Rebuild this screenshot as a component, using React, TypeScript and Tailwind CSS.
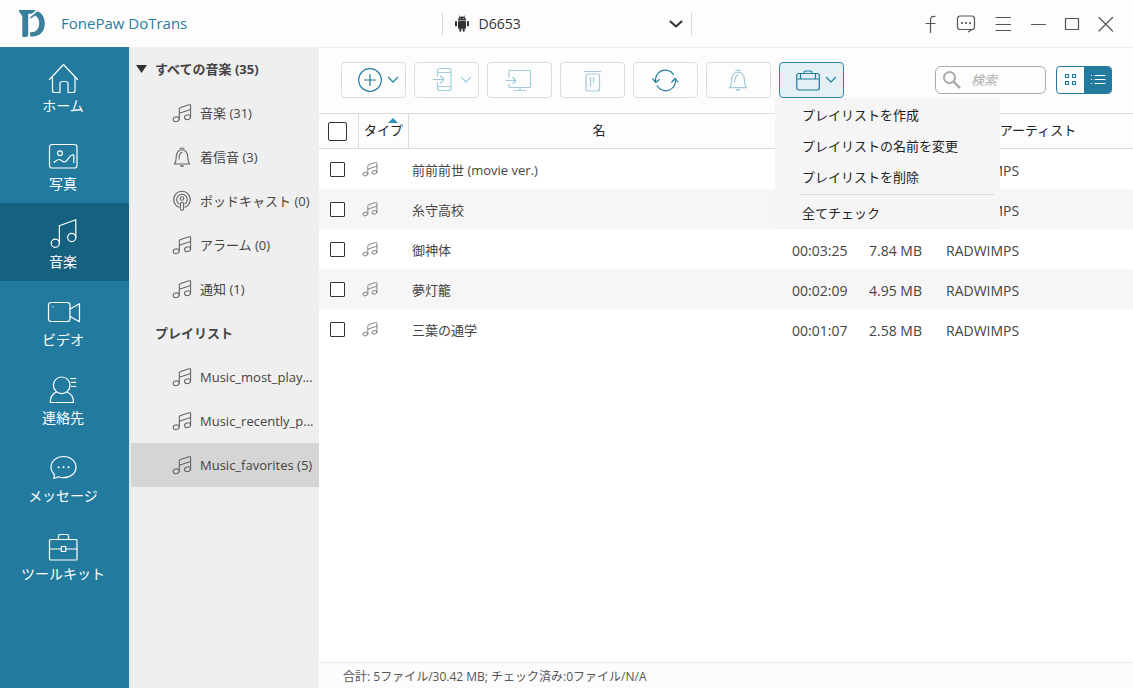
import { useState } from "react";
import type { ReactNode, SVGProps } from "react";

// ---------- Icons ----------

const Svg = ({ children, ...rest }: SVGProps<SVGSVGElement>) => (
  <svg
    fill="none"
    stroke="currentColor"
    strokeLinecap="round"
    strokeLinejoin="round"
    aria-hidden="true"
    overflow="visible"
    {...rest}
  >
    {children}
  </svg>
);

const NavSvg = ({ children }: { children: ReactNode }) => (
  <Svg viewBox="0 0 32 32" className="size-8" strokeWidth={1.2}>
    {children}
  </Svg>
);

const Logo = () => (
  <svg viewBox="0 0 28 28" className="size-7" fill="#3a7f9c" aria-hidden="true">
    <path d="M1 0h13.500c1.500 0 2.700.2 3.700.6l-4.500 3.200h-3.500V24.500c0 1.700-.9 2.500-2.500 2.500H5.500c-.8 0-1.200-.5-1.200-1.300V6.200L1 1.500z" />
    <path d="M19.500 1.200C24 3 26.800 7.500 26.800 13.300c0 8-4.800 13.200-12.300 13.200h-2.300V22.300c6 .2 9-3.200 9-9 0-3.800-1.300-6.300-3.800-7.900l-5.200 3.300V7.200z" />
  </svg>
);

const Android = () => (
  <svg viewBox="0 0 14 17" className="h-[17px] w-3.5" fill="#333" aria-hidden="true">
    <path d="M3 5.200a4 3.800 0 0 1 8 0z" />
    <path d="M4 .5l1.200 2M10 .5l-1.200 2" stroke="#333" strokeWidth=".7" />
    <rect x="3" y="5.800" width="8" height="8" rx=".8" />
    <rect x="0" y="6" width="2" height="5.500" rx="1" />
    <rect x="12" y="6" width="2" height="5.500" rx="1" />
    <rect x="4.300" y="12" width="2" height="4.800" rx="1" />
    <rect x="7.700" y="12" width="2" height="4.800" rx="1" />
    <circle cx="5.400" cy="3.600" r=".5" fill="#fff" />
    <circle cx="8.600" cy="3.600" r=".5" fill="#fff" />
  </svg>
);

const Chevron = () => (
  <Svg viewBox="0 0 10 6" className="h-1.5 w-2.5" strokeWidth={1.2}>
    <path d="M.5.500 5 5 9.500.500" />
  </Svg>
);

const Note = ({ className }: { className: string }) => (
  <Svg viewBox="0 0 20 20" className={className} strokeWidth={1.1}>
    <ellipse cx="4.200" cy="16.300" rx="3" ry="2.300" transform="rotate(-12 4.200 16.300)" />
    <ellipse cx="15.500" cy="14.200" rx="3" ry="2.300" transform="rotate(-12 15.500 14.200)" />
    <path d="M7.300 16V6.300c0-1 .4-1.500 1.300-1.800l8.500-2.700c1-.3 1.500 0 1.500 1V14M7.300 10.200l11.300-3.700" />
  </Svg>
);

const BellIcon = ({ className }: { className: string }) => (
  <Svg viewBox="0 0 20 20" className={className} strokeWidth={1.1}>
    <path d="M2.300 17h15.400c-1.500-1.500-1.800-3.500-1.900-7 0-4-2.300-7.200-5.800-7.200S4.200 6 4.200 10c0 3.500-.4 5.500-1.900 7zM8 1.200h4M7 12c0-4 .5-6 3-6.700" />
    <path d="M8.800 19h2.400" strokeWidth="1.600" />
  </Svg>
);

const Podcast = () => (
  <Svg viewBox="0 0 20 20" className="size-5" strokeWidth={1.1}>
    <path d="M7 16.300a8.300 8.300 0 1 1 6 0" />
    <path d="M7 12.900a5.300 5.300 0 1 1 6 0" />
    <circle cx="10" cy="7.500" r="1.800" />
    <rect x="8.400" y="11.300" width="3.200" height="8" rx="1.500" />
  </Svg>
);

// ---------- Data ----------

const navItems = [
  {
    label: "ホーム",
    icon: (
      <NavSvg>
        <path d="M2.500 16.500 16.500 1.500l14 15" />
        <path d="M5.500 14v13.500a2 2 0 0 0 2 2h5.500V20.500a2 2 0 0 1 2-2h4a2 2 0 0 1 2 2v9h5a2 2 0 0 0 2-2V14" />
      </NavSvg>
    ),
  },
  {
    label: "写真",
    icon: (
      <NavSvg>
        <rect x="2.500" y="3.500" width="27.500" height="23.500" rx="2.500" />
        <circle cx="13" cy="12.300" r="2.400" />
        <path d="M7 21.500c2-1.500 3-3 5-3 2.500 0 3 2.500 5.500 2.500 3.500 0 3-6 8.500-7.500q.8 0 .8 1V21.500" />
      </NavSvg>
    ),
  },
  {
    label: "音楽",
    icon: (
      <NavSvg>
        <circle cx="8.300" cy="24.300" r="4.100" />
        <circle cx="24.700" cy="18.500" r="4.100" />
        <path d="M12.400 24.300V6.700L28.800.700v17.800" />
      </NavSvg>
    ),
  },
  {
    label: "ビデオ",
    icon: (
      <NavSvg>
        <rect x="1.500" y="5.500" width="21.500" height="19" rx="2.500" />
        <path d="M23 12l9.500-5.300v18L23 19.500M6 9.700h.1" />
      </NavSvg>
    ),
  },
  {
    label: "連絡先",
    icon: (
      <NavSvg>
        <circle cx="14.700" cy="10.300" r="8.300" />
        <path d="M9.500 17C5.500 18.500 3.300 22 3.300 27.500h23.200c0-5.500-2.500-9-6.500-10.500M23.500 3.500h5.300M24.500 7.300h4.300M24.500 11.500h4.300" />
      </NavSvg>
    ),
  },
  {
    label: "メッセージ",
    icon: (
      <NavSvg>
        <path d="M6.800 25.500l.7-4C5.200 19.500 4 17 4 14.200 4 8.200 9.500 3.500 16.500 3.500S29 8.200 29 14.200s-5.500 10.500-12.500 10.500c-2 0-3.700-.3-5.300-1z" />
        <path d="M11.500 14.200h.1M16.500 14.200h.1M21.500 14.200h.1" strokeWidth="2" />
      </NavSvg>
    ),
  },
  {
    label: "ツールキット",
    icon: (
      <NavSvg>
        <rect x="2.500" y="8.500" width="27.500" height="20.500" rx="1" />
        <path d="M11.500 8.500V5a1.500 1.500 0 0 1 1.500-1.500h7A1.500 1.500 0 0 1 21.500 5v3.500M2.500 18h11.800M18.700 18H30" />
        <rect x="14.300" y="15.500" width="4.400" height="5" />
      </NavSvg>
    ),
  },
];

const note = <Note className="size-5" />;

const categories = [
  { label: "音楽 (31)", icon: note },
  { label: "着信音 (3)", icon: <BellIcon className="size-5" /> },
  { label: "ポッドキャスト (0)", icon: <Podcast /> },
  { label: "アラーム (0)", icon: note },
  { label: "通知 (1)", icon: note },
];

const playlists = ["Music_most_play...", "Music_recently_p...", "Music_favorites (5)"];

const songs = [
  { name: "前前前世 (movie ver.)", time: "", size: "", artist: "RADWIMPS" },
  { name: "糸守高校", time: "", size: "", artist: "RADWIMPS" },
  { name: "御神体", time: "00:03:25", size: "7.84 MB", artist: "RADWIMPS" },
  { name: "夢灯籠", time: "00:02:09", size: "4.95 MB", artist: "RADWIMPS" },
  { name: "三葉の通学", time: "00:01:07", size: "2.58 MB", artist: "RADWIMPS" },
];

// ---------- Header ----------

const WindowButton = ({ label, children }: { label: string; children: ReactNode }) => (
  <button aria-label={label} className="size-5 text-[#555]">
    <Svg viewBox="0 0 20 20" className="size-5" strokeWidth={1.2}>
      {children}
    </Svg>
  </button>
);

const Header = () => (
  <header className="flex h-[47px] shrink-0 items-center bg-[#fdfdfd] pr-[18px] pl-3">
    <div className="flex flex-1 items-center gap-[15px] pl-1.5">
      <Logo />
      <h1 className="text-[15px] text-[#2a7d9f]">FonePaw DoTrans</h1>
    </div>

    <div className="relative flex h-[22px] w-[250px] items-center border-x border-[#d8d8d8] pl-3">
      <Android />
      <select
        aria-label="デバイス"
        className="absolute inset-0 w-full appearance-none bg-transparent pl-9 text-sm leading-5 text-[#333] outline-none"
      >
        <option>D6653</option>
      </select>
      <Svg
        viewBox="0 0 14 8"
        className="pointer-events-none absolute right-2 h-2 w-3.5 text-[#333]"
        strokeWidth={2}
      >
        <path d="M1.500 1.500 7 6.500l5.500-5" />
      </Svg>
    </div>

    <div className="flex flex-1 items-center justify-end gap-[15px]">
      <WindowButton label="Facebook">
        <path d="M15 2.500c-3-.5-4.500.5-4.500 3.500V18.500M6 9.500h9" />
      </WindowButton>
      <WindowButton label="フィードバック">
        <path d="M16.500 15.500H5A2.500 2.500 0 0 1 2.500 13V4.500A2.500 2.500 0 0 1 5 2h12a2.500 2.500 0 0 1 2.500 2.500V13a2.500 2.500 0 0 1-2.500 2.500l-3.500 2.300" />
        <path d="M7 9h.1M11 9h.1M15 9h.1" strokeWidth="2" />
      </WindowButton>
      <WindowButton label="メニュー">
        <path d="M6 3.500h14.500M6 10.500h14.500M6 16.500h14.500" />
      </WindowButton>
      <WindowButton label="最小化">
        <path d="M6.500 10.500h14" />
      </WindowButton>
      <WindowButton label="最大化">
        <rect x="5.500" y="4.500" width="13" height="11" />
      </WindowButton>
      <WindowButton label="閉じる">
        <path d="M4 3.500l13.500 13.500M17.500 3.500L4 17" />
      </WindowButton>
    </div>
  </header>
);

// ---------- Left side ----------

const Nav = () => (
  <nav className="w-[129px] shrink-0 bg-[#227b9e]">
    {navItems.map((item) => (
      <a
        key={item.label}
        href="#"
        className={`flex h-[78px] flex-col items-center pt-4 pr-[3px] text-sm leading-[22px] text-white ${
          item.label === "音楽" ? "bg-[#14627f]" : ""
        }`}
      >
        {item.icon}
        <span>{item.label}</span>
      </a>
    ))}
  </nav>
);

const Sidebar = () => (
  <aside className="w-[190px] shrink-0 border-l-2 border-[#e3e9ec] bg-[#efefef] text-[13px] text-[#444]">
    <h2 className="flex h-11 items-center gap-2 pl-[5px] font-bold">
      <svg viewBox="0 0 11 8" className="h-2 w-[11px]" fill="#333" aria-hidden="true">
        <path d="M0 0h11L5.500 8z" />
      </svg>
      <span className="pt-0.5">すべての音楽 (35)</span>
    </h2>
    <ul>
      {categories.map((c) => (
        <li key={c.label}>
          <a href="#" className="flex h-11 items-center gap-2 pl-[41px] whitespace-nowrap">
            <span className="text-[#666]">{c.icon}</span>
            <span className="pt-0.5">{c.label}</span>
          </a>
        </li>
      ))}
    </ul>
    <h2 className="flex h-11 items-center pt-0.5 pl-6 font-bold">プレイリスト</h2>
    <ul>
      {playlists.map((p) => (
        <li key={p}>
          <a
            href="#"
            className={`flex h-11 items-center gap-2 pl-[41px] whitespace-nowrap ${
              p === "Music_favorites (5)" ? "bg-[#d5d5d5]" : ""
            }`}
          >
            <span className="text-[#666]">{note}</span>
            <span className="pt-0.5">{p}</span>
          </a>
        </li>
      ))}
    </ul>
  </aside>
);

// ---------- Toolbar ----------

type ToolButtonProps = {
  label: string;
  children: ReactNode;
  disabled?: boolean;
  arrow?: boolean;
  active?: boolean;
  onClick?: () => void;
};

const ToolButton = ({ label, children, disabled, arrow, active, onClick }: ToolButtonProps) => (
  <button
    aria-label={label}
    disabled={disabled}
    onClick={onClick}
    className={`flex h-9 w-[65px] items-center rounded border ${
      active ? "border-[#2a84a6] bg-[#e4f0f5]" : "border-[#dcdcdc]"
    } ${disabled ? "text-[#a3cbd9]" : "text-[#227b9e]"} ${arrow ? "gap-1.5 pl-4" : "justify-center"}`}
  >
    {children}
    {arrow && <Chevron />}
  </button>
);

const ToolSvg = ({ children }: { children: ReactNode }) => (
  <Svg viewBox="0 0 24 24" className="size-6" strokeWidth={1.2}>
    {children}
  </Svg>
);

const menuItem = "block h-[31px] w-full pl-[27px] text-left text-[13px] text-[#222] hover:bg-[#e4f0f5]";

const PlaylistMenu = () => (
  <div className="absolute top-9 -left-1 z-10 w-[225px] bg-[#f5f5f5] pt-0.5">
    <button className={menuItem}>プレイリストを作成</button>
    <button className={menuItem}>プレイリストの名前を変更</button>
    <button className={menuItem}>プレイリストを削除</button>
    <hr className="mt-px mr-1.5 mb-[3px] ml-[25px] border-[#d9d9d9]" />
    <button className={menuItem}>全てチェック</button>
  </div>
);

const Toolbar = () => {
  const [menuOpen, setMenuOpen] = useState(true);

  return (
    <div className="flex items-center gap-2 bg-[#fdfdfd] pt-3.5 pr-[21px] pb-[15px] pl-[22px]">
      <ToolButton label="追加" arrow>
        <ToolSvg>
          <circle cx="12" cy="12" r="11.300" />
          <path d="M12 6.500v11M6.500 12h11" />
        </ToolSvg>
      </ToolButton>
      <ToolButton label="デバイスへエクスポート" disabled arrow>
        <ToolSvg>
          <path d="M6.500 8V2.500a2 2 0 0 1 2-2h9.500a2 2 0 0 1 2 2v18a2 2 0 0 1-2 2H8.500a2 2 0 0 1-2-2V15M6.500 4.500H20M6.500 18.500H20M2 11.500h11M9.500 8l3.500 3.500L9.500 15" />
        </ToolSvg>
      </ToolButton>
      <ToolButton label="PCへエクスポート" disabled>
        <ToolSvg>
          <path d="M1 9V3.500a1 1 0 0 1 1-1h19.500a1 1 0 0 1 1 1v15a1 1 0 0 1-1 1H2a1 1 0 0 1-1-1V16M12 19.500V22.500M6.500 22.500H17M-2 12.500H8M5 9.500l3 3-3 3" />
        </ToolSvg>
      </ToolButton>
      <ToolButton label="削除" disabled>
        <ToolSvg>
          <path d="M3.500 3.500h16M9.500 9.500V18M12.500 9.500v5" />
          <rect x="5" y="6" width="13.500" height="17" rx="2" />
        </ToolSvg>
      </ToolButton>
      <ToolButton label="更新">
        <ToolSvg>
          <path d="M1.800 14.300A9.800 9.800 0 0 1 19.500 6.500M21.200 10.500A9.800 9.800 0 0 1 3.300 18" />
          <path d="M-1.200 11 1.800 14.300 5.200 11.700M17.800 14 21.200 10.500 24 14" />
        </ToolSvg>
      </ToolButton>
      <ToolButton label="着信音に設定" disabled>
        <BellIcon className="mr-0.5 size-[22px]" />
      </ToolButton>
      <div className="relative">
        <ToolButton label="プレイリスト" arrow active onClick={() => setMenuOpen(!menuOpen)}>
          <ToolSvg>
            <rect x=".800" y="5.500" width="22.500" height="16.500" rx="2" />
            <path d="M1 11h22M8 5.500V4.500a1.500 1.500 0 0 1 1.500-1.500h5A1.500 1.500 0 0 1 16 4.500v1M4.500 6v4.500M19.500 6v4.500" />
          </ToolSvg>
        </ToolButton>
        {menuOpen && <PlaylistMenu />}
      </div>

      <div className="relative ml-auto w-[111px]">
        <Svg
          viewBox="0 0 18 18"
          className="absolute top-[5px] left-2 size-[18px] text-[#aaa]"
          strokeWidth={2}
        >
          <circle cx="6.500" cy="6.500" r="5.500" />
          <path d="M10.800 10.800l5.500 5.500" strokeWidth="2.500" />
        </Svg>
        <input
          type="search"
          aria-label="検索"
          placeholder="検索"
          className="h-7 w-full rounded-md border border-[#aaa] bg-transparent pl-[35px] text-[13px] italic outline-none placeholder:text-[#b0b0b0]"
        />
      </div>

      <div className="ml-0.5 flex h-7 w-14 overflow-hidden rounded border border-[#227b9e]">
        <button aria-label="グリッド表示" className="flex flex-1 items-center justify-center text-[#227b9e]">
          <Svg viewBox="0 0 12 12" className="size-3" strokeWidth={1.2} strokeLinejoin="miter">
            <path d="M.500.500h3v3h-3zM7.500.500h3v3h-3zM.500 7.500h3v3h-3zM7.500 7.500h3v3h-3z" />
          </Svg>
        </button>
        <button aria-label="リスト表示" className="flex flex-1 items-center justify-center bg-[#227b9e] text-white">
          <Svg viewBox="0 0 14 12" className="h-3 w-3.5" strokeWidth={1.1}>
            <path d="M4 1.500h10M4 5.500h10M4 9.500h10M.500 1.500h.1M.500 5.500h.1M.500 9.500h.1" />
          </Svg>
        </button>
      </div>
    </div>
  );
};

// ---------- Table ----------

const headCell = "h-9 border-y border-[#dcdcdc] font-normal";
const textCell = "pt-[3px] pl-[3px]";

const SongTable = () => (
  <table className="w-full table-fixed border-separate border-spacing-0 text-[13px] text-[#444]">
    <colgroup>
      <col className="w-10" />
      <col className="w-[50px]" />
      <col />
      <col className="w-[77px]" />
      <col className="w-[77px]" />
      <col className="w-[190px]" />
    </colgroup>
    <thead className="bg-[#fdfdfd] text-[#222]">
      <tr>
        <th className={`${headCell} border-r pl-[9px]`}>
          <input
            type="checkbox"
            aria-label="すべて選択"
            className="block size-[19px] appearance-none rounded-xs border border-[#333] bg-white checked:bg-[#227b9e]"
          />
        </th>
        <th className={`${headCell} relative border-r`}>
          タイプ
          <svg viewBox="0 0 10 5" className="absolute top-1 right-2.5 h-[5px] w-2.5" fill="#2a8fb5" aria-hidden="true">
            <path d="M0 5h10L5 0z" />
          </svg>
        </th>
        <th className={headCell}>名</th>
        <th className={headCell} aria-label="時間" />
        <th className={headCell} aria-label="サイズ" />
        <th className={headCell}>アーティスト</th>
      </tr>
    </thead>
    <tbody>
      {songs.map((s) => (
        <tr key={s.name} className="h-10 even:bg-[#f6f6f6]">
          <td className="pl-[11px]">
            <input
              type="checkbox"
              aria-label={s.name}
              className="block size-[15px] appearance-none rounded-[1px] border border-[#333] bg-white checked:bg-[#227b9e]"
            />
          </td>
          <td className="pl-[3px] text-[#777]">
            <Note className="size-4" />
          </td>
          <td className={textCell}>{s.name}</td>
          <td className={`${textCell} text-sm`}>{s.time}</td>
          <td className={`${textCell} text-sm`}>{s.size}</td>
          <td className={`${textCell} text-sm`}>{s.artist}</td>
        </tr>
      ))}
    </tbody>
  </table>
);

const App = () => (
  <div className="flex min-h-screen flex-col bg-white font-['Open_Sans','Noto_Sans_CJK_JP',sans-serif]">
    <Header />
    <div className="flex flex-1">
      <Nav />
      <Sidebar />
      <main className="flex min-w-0 flex-1 flex-col border-t border-[#ececec]">
        <Toolbar />
        <div className="flex-1">
          <SongTable />
        </div>
        <footer className="h-[26px] border-t border-[#ececec] bg-[#fcfcfc] pl-6 text-xs leading-7 text-[#555]">
          合計: 5ファイル/30.42 MB; チェック済み:0ファイル/N/A
        </footer>
      </main>
    </div>
  </div>
);

export default App;
